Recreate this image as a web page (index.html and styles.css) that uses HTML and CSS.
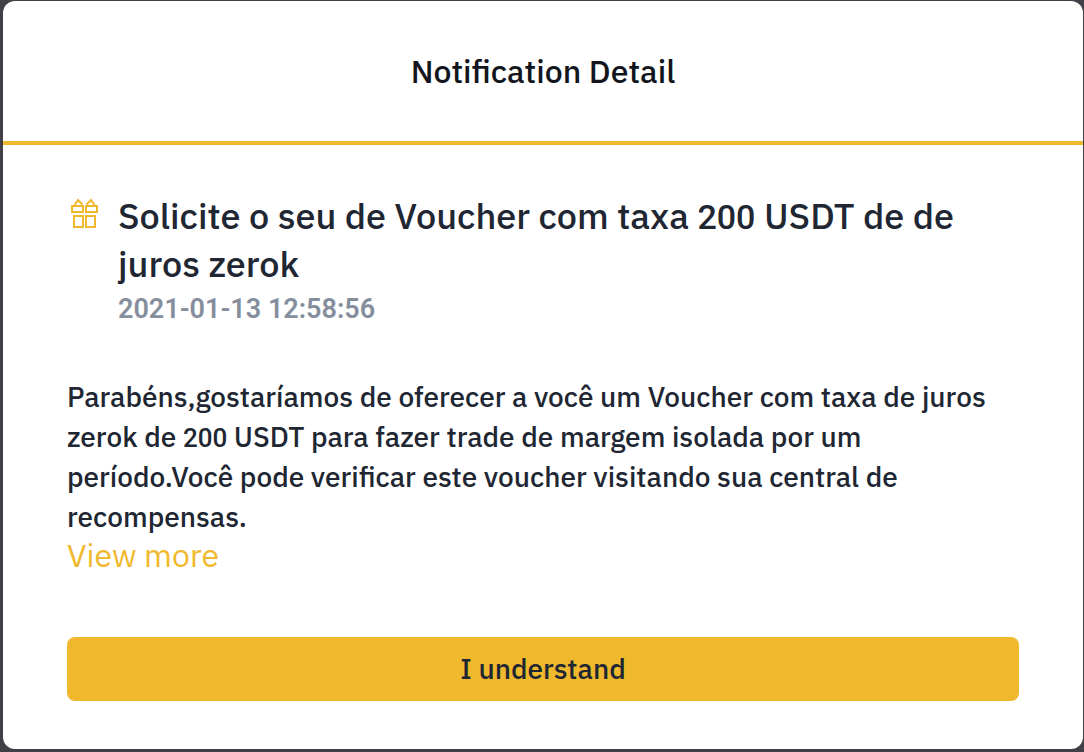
FILE: index.html
```html
<!DOCTYPE html>
<html lang="pt">
<head>
<meta charset="utf-8">
<title>Notification Detail</title>
<link rel="stylesheet" href="styles.css">
</head>
<body>
<main class="dialog" role="dialog" aria-labelledby="dialog-title">
  <header class="dialog-header">
    <h1 class="dialog-title" id="dialog-title">Notification Detail</h1>
  </header>
  <div class="dialog-body">
    <div class="summary">
      <svg class="gift-icon" viewBox="0 0 35 36" fill="none" stroke="currentColor" stroke-width="2" aria-hidden="true">
        <path d="M5 10h11v6H5zM19 10h11v6H19zM7 20h9v11H7zM19 20h9v11h-9zM7.500 9l3.500-5 4.500 4.500M19.500 8.500l4.500-4.500 3.500 5"/>
      </svg>
      <div class="summary-text">
        <h2 class="subject">Solicite o seu de Voucher com taxa <span class="numeral">200</span> USDT de de juros zerok</h2>
        <time class="date" datetime="2021-01-13T12:58:56">2021-01-13 12:58:56</time>
      </div>
    </div>
    <p class="message">Parabéns,gostaríamos de oferecer a você um Voucher com taxa de juros zerok de <span class="numeral">200</span> USDT para fazer trade de margem isolada por um período.Você pode verificar este voucher visitando sua central de recompensas.</p>
    <a class="more" href="#">View more</a>
    <button class="confirm" type="button">I understand</button>
  </div>
</main>
</body>
</html>
```
FILE: styles.css
```css
* {
  box-sizing: border-box;
}

body {
  margin: 0;
  min-height: 100vh;
  padding: 1px 1px 3px 3px;
  display: flex;
  background: #414046;
  color: #202632;
  font-family: "IBM Plex Sans", Roboto, sans-serif;
  font-weight: 500;
}

.dialog {
  flex: 1;
  background: #fff;
  border-radius: 12px;
}

.dialog-header {
  padding: 48px 64px;
  border-bottom: 4px solid #f0b92d;
  text-align: center;
}

.dialog-title,
.subject,
.message {
  margin: 0;
  font-weight: 500;
}

.dialog-title {
  color: #12161c;
  font-size: 32px;
  line-height: 44px;
}

.dialog-body {
  padding: 47px 64px 48px;
  display: flex;
  flex-direction: column;
}

.summary {
  display: flex;
  gap: 16px;
  margin-bottom: 48px;
}

.gift-icon {
  flex: none;
  width: 35px;
  height: 36px;
  margin-top: 4px;
  color: #f0b92d;
}

.subject {
  font-size: 36px;
  line-height: 48px;
}

.numeral,
.date {
  font-family: Roboto, sans-serif;
}

.numeral {
  font-weight: 500;
  line-height: 1;
}

.subject .numeral {
  font-size: 34px;
}

.message .numeral {
  font-size: 26px;
}

.date {
  display: block;
  padding-top: 1px;
  color: #848e9c;
  font-size: 27px;
  line-height: 40px;
  font-weight: 600;
}

.message {
  font-size: 28px;
  line-height: 40px;
}

.more {
  align-self: flex-start;
  color: #f0b92d;
  font-size: 32px;
  line-height: 36px;
  font-weight: 400;
  text-decoration: none;
}

.confirm {
  margin-top: 64px;
  height: 64px;
  border: 0;
  border-radius: 8px;
  background: #f0b92d;
  color: inherit;
  font: 500 28px/40px "IBM Plex Sans", Roboto, sans-serif;
}
```
